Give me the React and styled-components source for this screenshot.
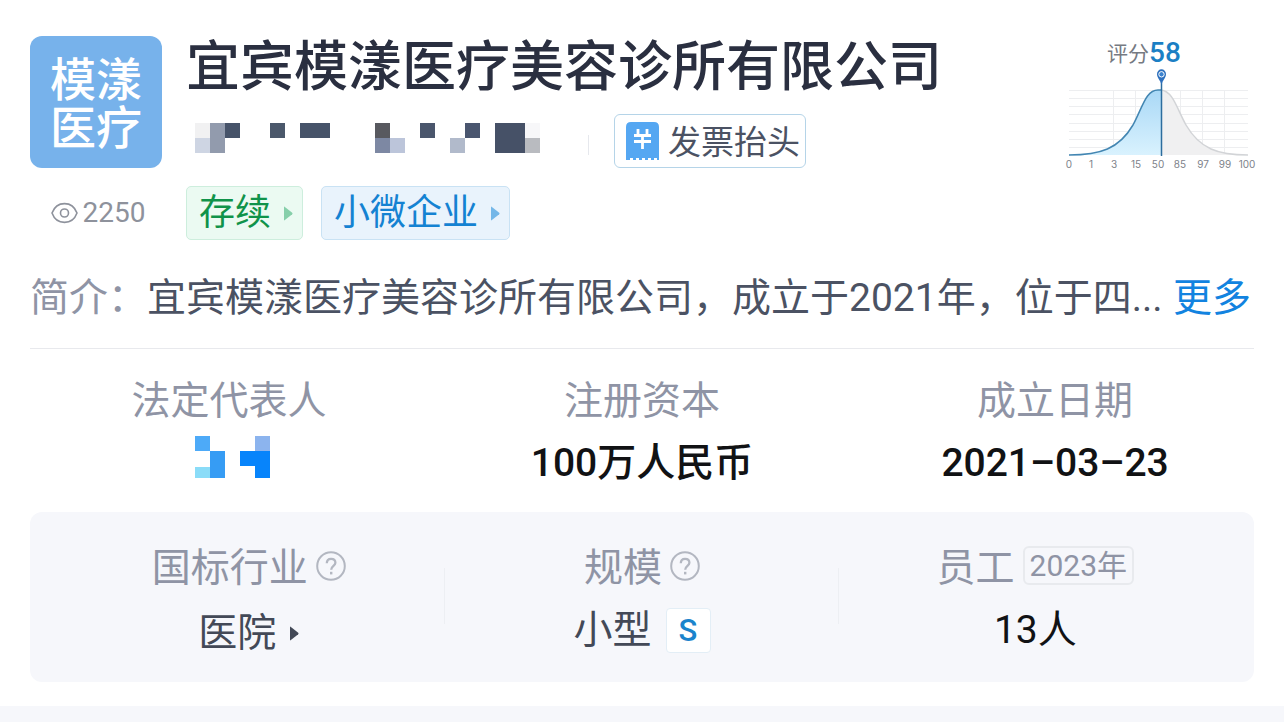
import React from "react";
import styled, { createGlobalStyle } from "styled-components";

const GlobalStyle = createGlobalStyle`
  *, *::before, *::after { box-sizing: border-box; }
  body {
    margin: 0;
    background: #ffffff;
    color: #4b5263;
    font-family: Roboto, "Noto Sans CJK SC", sans-serif;
  }
  button { font: inherit; color: inherit; background: none; border: 0; padding: 0; cursor: pointer; }
  a { color: inherit; text-decoration: none; }
  h1, p, dl, dt, dd { margin: 0; font-weight: inherit; }
  svg { display: block; flex: none; }
`;

const Page = styled.main`
  border-bottom: 16px solid #f6f7fb;
  padding: 36px 30px 24px;
`;

const Header = styled.header`
  display: flex;
  align-items: flex-start;
  gap: 24px;
`;

const Identity = styled.div`
  width: 132px;
  flex: none;
`;

const Logo = styled.div`
  height: 132px;
  padding: 20px 20px 16px;
  border-radius: 12px;
  background: #77b2eb;
  color: #ffffff;
  font-size: 46px;
  font-weight: 500;
  line-height: 48px;
  word-break: break-all;
`;

const Views = styled.p`
  display: flex;
  align-items: center;
  justify-content: center;
  gap: 5px;
  margin-top: 29px;
  padding-left: 4px;
  color: #8e929c;
  font-size: 28px;
  line-height: 32px;
`;

const Summary = styled.div`
  flex: 1;
  min-width: 0;
`;

const CompanyName = styled.h1`
  && { font-weight: 500; }
  color: #2a2f40;
  font-size: 54px;
  line-height: 64px;
  white-space: nowrap;
`;

const ContactRow = styled.div`
  display: flex;
  align-items: center;
  margin-top: 14px;
  padding-left: 9px;
`;

const Separator = styled.span`
  width: 1px;
  height: 20px;
  margin: 8px 25px 0 48px;
  background: #e6e8ed;
`;

const InvoiceButton = styled.button`
  && {
    display: flex;
    align-items: center;
    gap: 9px;
    height: 54px;
    padding: 0 5px 0 11px;
    border: 1px solid #b5d4e8;
    border-radius: 6px;
    font-size: 33px;
    line-height: 48px;
    white-space: nowrap;
  }
`;

const InvoiceText = styled.span`
  padding-top: 4px;
`;

const TagRow = styled.div`
  display: flex;
  gap: 18px;
  margin-top: 18px;
`;

const tones = {
  green: { text: "#10934a", fill: "#ebfaf2", line: "#cdeedd", arrow: "#86cfaa" },
  blue: { text: "#1482d2", fill: "#e9f3fc", line: "#c9e2f4", arrow: "#74b7e8" },
};

const Tag = styled.button`
  && {
    display: flex;
    align-items: center;
    gap: 13px;
    height: 54px;
    padding: 0 9px 0 12px;
    border: 1px solid ${(p) => tones[p.$tone].line};
    border-radius: 5px;
    background: ${(p) => tones[p.$tone].fill};
    color: ${(p) => tones[p.$tone].text};
    font-size: 36px;
    line-height: 48px;
    white-space: nowrap;
  }
`;

const Score = styled.section`
  flex: none;
  width: 200px;
  margin-right: -8px;
`;

const ScoreTitle = styled.p`
  display: flex;
  align-items: center;
  justify-content: center;
  height: 32px;
  padding-right: 36px;
  color: #767a82;
  font-size: 21px;
`;

const ScoreValue = styled.strong`
  color: #1b7fc4;
  font-size: 28px;
  font-weight: 500;
`;

const Intro = styled.div`
  display: flex;
  justify-content: space-between;
  margin-top: 28px;
  padding: 0 3px 20px 0;
  border-bottom: 1px solid #e8e9ed;
  font-size: 39px;
  line-height: 60px;
  white-space: nowrap;
`;

const IntroText = styled.p`
  overflow: hidden;
`;

const Muted = styled.span`
  color: #8f94a5;
`;

const MoreLink = styled.a`
  && { color: #1283e0; }
  flex: none;
`;

const Stats = styled.dl`
  display: grid;
  grid-template-columns: 13fr 14fr 13fr;
  padding: 22px 0 17px;
  text-align: center;
`;

const Stat = styled.div`
  display: flex;
  flex-direction: column;
  align-items: center;
`;

const Label = styled.dt`
  display: flex;
  align-items: center;
  gap: 8px;
  height: 60px;
  color: #8f94a5;
  font-size: 39px;
  line-height: 60px;
  white-space: nowrap;
`;

const Value = styled.dd`
  display: flex;
  align-items: center;
  gap: 14px;
  height: 64px;
  padding-top: ${(p) => (p.$low ? 6 : 0)}px;
  color: ${(p) => (p.$strong ? "#111214" : "#434957")};
  font-size: 39px;
  line-height: 58px;
  white-space: nowrap;
  && { font-weight: ${(p) => (p.$medium ? 500 : 400)}; }
`;

const RepresentativeLink = styled.a`
  padding: 0 0 6px 8px;
`;

const Panel = styled.dl`
  display: grid;
  grid-template-columns: repeat(3, 1fr);
  padding: 26px 22px 14px;
  border-radius: 12px;
  background: #f6f7fb;
`;

const PanelStat = styled(Stat)`
  padding-bottom: 6px;
  background: ${(p) =>
    p.$divided ? "linear-gradient(#edeff3, #edeff3) right 30px / 1px 56px no-repeat" : "none"};
`;

const YearBadge = styled.span`
  height: 39px;
  margin-bottom: 5px;
  padding: 0 5px;
  border: 2px solid #e8eaee;
  border-radius: 6px;
  font-size: 30px;
  line-height: 35px;
`;

const SizeBadge = styled.span`
  width: 45px;
  height: 45px;
  border: 1px solid #e3eef6;
  border-radius: 4px;
  background: #ffffff;
  color: #1b84cc;
  font-size: 31px;
  font-weight: 500;
  line-height: 43px;
  text-align: center;
`;

const HelpButton = styled.button`
  && { margin-bottom: 4px; }
`;

const ArrowIcon = ({ color, size = 15 }) => (
  <svg width="9" height={size} viewBox="0 0 9 15" aria-hidden="true">
    <path d="M0 1.2Q0 .2.9.9L8.2 6.7Q9 7.5 8.2 8.3L.9 14.1Q0 14.8 0 13.8Z" fill={color} />
  </svg>
);

const EyeIcon = () => (
  <svg width="27" height="22" viewBox="0 0 27 22" fill="none" stroke="#8e929c" strokeWidth="1.6" aria-hidden="true">
    <path d="M1 11C3.500 4.200 8.600 1.600 13.500 1.600S23.500 4.200 26 11C23.500 17.800 18.400 20.400 13.500 20.400S3.500 17.800 1 11Z" />
    <circle cx="13.5" cy="11" r="4" />
  </svg>
);

const InvoiceIcon = () => (
  <svg width="33" height="38" viewBox="0 0 33 38" aria-hidden="true">
    <path d="M0 5Q0 0 5 0H28Q33 0 33 5V38H31V36H28V38H25V36H22V38H19V36H16V38H13V36H10V38H7V36H4V38H0Z" fill="#55a7f2" />
    <path d="M12 7V13M21 7V13M8 13.500H25M8 19.500H25M16.500 13.500V27" stroke="#fff" strokeWidth="2.800" fill="none" />
  </svg>
);

const HelpIcon = () => (
  <svg width="30" height="30" viewBox="0 0 30 30" fill="none" stroke="#b3b7c1" strokeWidth="2" aria-hidden="true">
    <circle cx="15" cy="15" r="13.800" />
    <path d="M10.800 12.300C10.800 9.500 12.500 7.800 15.100 7.800S19.400 9.500 19.400 11.800C19.400 14.800 15.200 15 15.200 18.700" strokeWidth="2.300" />
    <path d="M15.200 20.800V23.400" strokeWidth="2.400" />
  </svg>
);

const HIDDEN_PHONE = [
  [0, 0, 15, 15, "#f1f1f2"], [0, 15, 15, 15, "#ced5e3"], [15, 0, 15, 30, "#929bad"],
  [30, 0, 15, 15, "#465369"], [75, 0, 15, 15, "#4b586b"], [105, 0, 30, 15, "#465369"],
  [180, 0, 15, 15, "#58595f"], [180, 15, 15, 15, "#7d88a3"], [195, 15, 15, 15, "#bcc5da"],
  [225, 0, 15, 15, "#4a566c"], [255, 15, 15, 15, "#b1bacb"], [270, 0, 15, 15, "#4a566f"],
  [300, 0, 30, 30, "#465167"], [330, 0, 15, 15, "#f7f7f9"], [330, 15, 15, 15, "#b9bbc0"],
];

const HIDDEN_NAME = [
  [0, 0, 15, 15, "#4daaf8"], [15, 15, 15, 27, "#369cf4"], [0, 31, 15, 11, "#8adcf8"],
  [45, 15, 30, 15, "#0784fb"], [60, 0, 15, 15, "#8cb4ee"], [60, 30, 15, 12, "#0784fb"],
];

const Mosaic = ({ cells, width, height, label }) => (
  <svg width={width} height={height} role="img" aria-label={label}>
    {cells.map(([x, y, w, h, fill]) => (
      <rect key={`${x}-${y}`} x={x} y={y} width={w} height={h} fill={fill} />
    ))}
  </svg>
);

const TICKS = ["0", "1", "3", "15", "50", "85", "97", "99", "100"];

const ScoreChart = () => (
  <svg width="200" height="106" viewBox="0 0 200 106" role="img" aria-label="评分分布">
    <defs>
      <linearGradient id="reached" x1="0" y1="0" x2="0" y2="1">
        <stop offset="0" stopColor="#a9d8f6" />
        <stop offset="1" stopColor="#d9f2fe" />
      </linearGradient>
    </defs>
    <g stroke="#edeef0" fill="none">
      {[22, 30, 38, 46, 55, 63, 71, 79].map((y) => <path key={y} d={`M7 ${y}.500H186`} />)}
      {[51, 73, 95, 118, 140, 162].map((x) => <path key={x} d={`M${x}.500 22V87`} />)}
    </g>
    <path d="M7 87C38 87 57 81 71 57C81 38 84 22 96 22H99V87Z" fill="url(#reached)" />
    <path d="M99 22C111 23 115 41 124 57C138 81 156 87 186 87H99Z" fill="#f0f0f1" />
    <path d="M99 22C111 23 115 41 124 57C138 81 156 87 186 87" fill="none" stroke="#d2d4d7" strokeWidth="1.500" />
    <path d="M7 87C38 87 57 81 71 57C81 38 84 22 96 22H99" fill="none" stroke="#4386b2" strokeWidth="1.500" />
    <path d="M99.500 14V88" stroke="#2c6d9e" strokeWidth="1.500" />
    <path d="M99.500 17C98.500 12 95 10 95 6A4.500 4.700 0 0 1 104 6C104 10 100.500 12 99.500 17Z" fill="#2e70bd" />
    <circle cx="99.500" cy="6.300" r="2.700" fill="#3c83cf" stroke="#fff" />
    <g fill="#7d828a" fontSize="10" fontFamily="Inter, sans-serif" textAnchor="middle">
      {TICKS.map((t, i) => <text key={t} x={7 + Math.round(i * 22.25)} y="100">{t}</text>)}
    </g>
  </svg>
);

const Help = ({ label }) => (
  <HelpButton type="button" aria-label={label}><HelpIcon /></HelpButton>
);

export default function App() {
  return (
    <>
      <GlobalStyle />
      <Page>
        <Header>
          <Identity>
            <Logo>模漾医疗</Logo>
            <Views><EyeIcon />2250</Views>
          </Identity>
          <Summary>
            <CompanyName>宜宾模漾医疗美容诊所有限公司</CompanyName>
            <ContactRow>
              <Mosaic cells={HIDDEN_PHONE} width={345} height={36} label="电话已隐藏" />
              <Separator />
              <InvoiceButton type="button"><InvoiceIcon /><InvoiceText>发票抬头</InvoiceText></InvoiceButton>
            </ContactRow>
            <TagRow>
              <Tag type="button" $tone="green">存续<ArrowIcon color={tones.green.arrow} /></Tag>
              <Tag type="button" $tone="blue">小微企业<ArrowIcon color={tones.blue.arrow} /></Tag>
            </TagRow>
          </Summary>
          <Score>
            <ScoreTitle>评分<ScoreValue>58</ScoreValue></ScoreTitle>
            <ScoreChart />
          </Score>
        </Header>

        <Intro>
          <IntroText><Muted>简介：</Muted>宜宾模漾医疗美容诊所有限公司，成立于2021年，位于四...</IntroText>
          <MoreLink href="#more">更多</MoreLink>
        </Intro>

        <Stats>
          <Stat>
            <Label>法定代表人</Label>
            <Value>
              <RepresentativeLink href="#representative">
                <Mosaic cells={HIDDEN_NAME} width={75} height={48} label="姓名已隐藏" />
              </RepresentativeLink>
            </Value>
          </Stat>
          <Stat>
            <Label>注册资本</Label>
            <Value $strong $medium>100万人民币</Value>
          </Stat>
          <Stat>
            <Label>成立日期</Label>
            <Value $strong $medium>2021–03–23</Value>
          </Stat>
        </Stats>

        <Panel>
          <PanelStat $divided>
            <Label>国标行业<Help label="国标行业说明" /></Label>
            <Value $low><a href="#industry">医院</a><ArrowIcon color="#434957" size={17} /></Value>
          </PanelStat>
          <PanelStat $divided>
            <Label>规模<Help label="规模说明" /></Label>
            <Value>小型<SizeBadge>S</SizeBadge></Value>
          </PanelStat>
          <PanelStat>
            <Label>员工<YearBadge>2023年</YearBadge></Label>
            <Value $strong>13人</Value>
          </PanelStat>
        </Panel>
      </Page>
    </>
  );
}
